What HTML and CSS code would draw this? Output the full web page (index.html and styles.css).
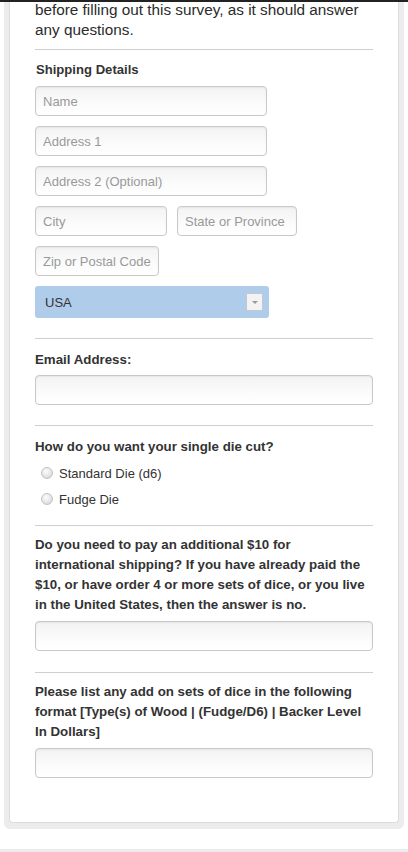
FILE: index.html
```html
<!DOCTYPE html>
<html lang="en">
<head>
<meta charset="utf-8">
<title>Survey</title>
<link rel="stylesheet" href="styles.css">
</head>
<body>
<div class="topbar"></div>
<div class="outer">
  <div class="inner">
    <p class="intro">before filling out this survey, as it should answer any questions.</p>
    <div class="rule rule-first"></div>

    <div class="section-title">Shipping Details</div>
    <div class="fields">
      <input class="input w-long" type="text" placeholder="Name">
      <input class="input w-long" type="text" placeholder="Address 1">
      <input class="input w-long" type="text" placeholder="Address 2 (Optional)">
      <div class="row">
        <input class="input w-city" type="text" placeholder="City">
        <input class="input w-state" type="text" placeholder="State or Province">
      </div>
      <input class="input w-zip" type="text" placeholder="Zip or Postal Code">
      <div class="select">
        <span>USA</span>
        <span class="arrow"></span>
      </div>
    </div>
    <div class="rule rule-after-input"></div>

    <div class="label label-short">Email Address:</div>
    <input class="input w-full input-email" type="text">
    <div class="rule rule-after-input"></div>

    <div class="label label-short">How do you want your single die cut?</div>
    <div class="radios">
      <div class="radio-row"><span class="radio"></span><span>Standard Die (d6)</span></div>
      <div class="radio-row"><span class="radio"></span><span>Fudge Die</span></div>
    </div>
    <div class="rule rule-after-radios"></div>

    <div class="label label-long">Do you need to pay an additional $10 for international shipping? If you have already paid the $10, or have order 4 or more sets of dice, or you live in the United States, then the answer is no.</div>
    <input class="input w-full input-after-long" type="text">
    <div class="rule rule-after-input2"></div>

    <div class="label label-long">Please list any add on sets of dice in the following format [Type(s) of Wood | (Fudge/D6) | Backer Level In Dollars]</div>
    <input class="input w-full input-after-long" type="text">
  </div>
</div>
<div class="footer"></div>
</body>
</html>
```

FILE: styles.css
```css
body {
  margin: 0;
  background: #fff;
  color: #333;
  font-family: "Liberation Sans", Arial, sans-serif;
}

.topbar {
  position: fixed;
  top: 0;
  left: 0;
  right: 0;
  height: 2px;
  background: #222;
  z-index: 10;
}

.outer {
  margin: 0 4px;
  padding: 0 5px 6px;
  background: #ececec;
  border-radius: 0 0 6px 6px;
}

.inner {
  background: #fff;
  border: 1px solid #dcdcdc;
  border-top: 0;
  border-radius: 0 0 4px 4px;
  padding: 0 25px 44px;
}

.intro {
  margin: 0;
  font-size: 15.3px;
  line-height: 20px;
  color: #2b2b2b;
}

.rule {
  height: 1px;
  background: #cfcfcf;
}

.rule-first { margin-top: 9px; }
.rule-after-input { margin-top: 20px; }
.rule-after-radios { margin-top: 16px; }
.rule-after-input2 { margin-top: 21px; }

.section-title {
  margin-top: 10px;
  font-size: 13.1px;
  font-weight: bold;
  line-height: 20px;
  padding-left: 1px;
}

.label {
  font-size: 13.3px;
  font-weight: bold;
  line-height: 20px;
}

.label-short { margin-top: 11px; }
.label-long { margin-top: 9px; }

.fields {
  margin-top: 6px;
  display: flex;
  flex-direction: column;
  align-items: flex-start;
  gap: 10px;
}

.row {
  display: flex;
  gap: 10px;
}

.input {
  display: block;
  box-sizing: border-box;
  height: 30px;
  margin: 0;
  padding: 0 7px;
  border: 1px solid #c9c9c9;
  border-radius: 4px;
  background: linear-gradient(#f3f3f3, #fbfbfb 60%, #fff);
  box-shadow: inset 0 1px 2px rgba(0, 0, 0, 0.06);
  font-family: "Liberation Sans", Arial, sans-serif;
  font-size: 13px;
  color: #333;
  outline: none;
}

.input::placeholder {
  color: #999;
}

.w-long { width: 232px; }
.w-city { width: 132px; }
.w-state { width: 120px; }
.w-zip { width: 124px; }
.w-full { width: 100%; }

.input-email { margin-top: 5px; }
.input-after-long { margin-top: 6px; }

.select {
  box-sizing: border-box;
  width: 234px;
  height: 32px;
  padding: 0 6px 0 10px;
  display: flex;
  align-items: center;
  justify-content: space-between;
  background: #b0cceb;
  border-radius: 3px;
  font-size: 13px;
  color: #333;
}

.arrow {
  box-sizing: border-box;
  width: 17px;
  height: 18px;
  border: 1px solid #c4c8cc;
  background: #f3f3f3;
  display: flex;
  align-items: center;
  justify-content: center;
}

.arrow::after {
  content: "";
  width: 0;
  height: 0;
  border-left: 3px solid transparent;
  border-right: 3px solid transparent;
  border-top: 3px solid #9a9a9a;
}

.radios {
  display: flex;
  flex-direction: column;
  gap: 6px;
  margin-top: 6px;
}

.radio-row {
  display: flex;
  align-items: center;
  height: 20px;
  font-size: 13px;
  color: #333;
}

.radio {
  box-sizing: border-box;
  width: 12px;
  height: 12px;
  margin: -1px 6px 0 6px;
  border-radius: 50%;
  border: 1px solid #c3c3c3;
  background: radial-gradient(circle at 40% 35%, #fdfdfd, #dcdcdc 75%);
}

.footer {
  margin-top: 20px;
  height: 10px;
  background: #ececec;
}
```
